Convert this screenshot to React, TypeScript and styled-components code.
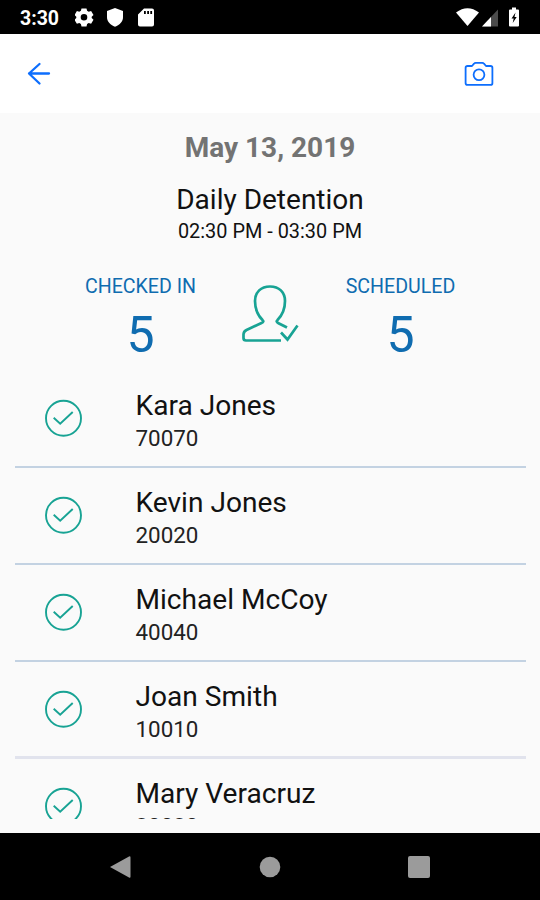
import React from "react";
import styled, { createGlobalStyle } from "styled-components";

const COLOR_BLUE = "#0f6cb0";
const COLOR_ACTION = "#0d6efd";
const COLOR_GREEN = "#18a394";

const GlobalStyle = createGlobalStyle`
  * {
    box-sizing: border-box;
  }
  body {
    margin: 0;
    font-family: Roboto, "Noto Sans", sans-serif;
    background: #fafafa;
  }
  svg {
    display: block;
    flex-shrink: 0;
  }
`;

const Screen = styled.div`
  display: flex;
  flex-direction: column;
  width: 540px;
  height: 900px;
  overflow: hidden;
  background: #fafafa;
`;

const StatusBar = styled.div`
  display: flex;
  justify-content: space-between;
  height: 34px;
  padding: 0 20px;
  background: #000;
  color: #fff;
`;

const StatusLeft = styled.div`
  display: flex;
  align-items: center;
`;

const Clock = styled.div`
  width: 55px;
  padding-top: 4px;
  font-size: 19.5px;
  font-weight: 700;
  line-height: 34px;
`;

const Toolbar = styled.header`
  display: flex;
  align-items: center;
  justify-content: space-between;
  height: 79px;
  padding: 0 46.5px 0 27px;
  background: #fff;
`;

const IconButton = styled.button`
  padding: 0;
  border: none;
  background: none;
  color: ${COLOR_ACTION};
`;

const Summary = styled.section`
  display: flex;
  flex-direction: column;
  align-items: center;
  padding-top: 17px;
`;

const DateText = styled.h1`
  margin: 0;
  color: #737373;
  font-size: 28px;
  font-weight: 700;
  line-height: 36px;
`;

const Title = styled.h2`
  margin: 16px 0 0;
  color: #111;
  font-size: 28px;
  font-weight: 400;
  line-height: 36px;
`;

const Time = styled.div`
  color: #111;
  font-size: 19.9px;
  line-height: 27px;
`;

const Stats = styled.div`
  display: grid;
  grid-template-columns: 202px 58px 202px;
  width: 462px;
  height: 126px;
  padding-top: 29px;
`;

const Stat = styled.div`
  display: flex;
  flex-direction: column;
  align-items: center;
  padding-left: 1px;
  color: ${COLOR_BLUE};
`;

const StatIcon = styled.div`
  padding-top: 10px;
`;

const StatLabel = styled.div`
  font-size: 19.6px;
  line-height: 26px;
`;

const StatValue = styled.div`
  font-size: 50px;
  line-height: 71px;
`;

const List = styled.ul`
  flex: 1;
  margin: 0 14px 0 15px;
  padding: 0;
  overflow: hidden;
  list-style: none;
`;

const Row = styled.li<{ $last?: boolean }>`
  display: flex;
  height: 97px;
  padding: 17px 0 0 30px;
  border-bottom: ${({ $last }) =>
    $last ? "3px solid #e1e3ed" : "2px solid #c3d2e2"};
`;

const CheckBox = styled.div`
  width: 90.5px;
  padding-top: 11px;
`;

const Name = styled.div`
  color: #111;
  font-size: 28.1px;
  line-height: 35px;
`;

const StudentId = styled.div`
  color: #222;
  font-size: 22.4px;
  line-height: 30px;
`;

const NavBar = styled.nav`
  display: flex;
  align-items: center;
  justify-content: space-between;
  height: 67px;
  margin-top: 14px;
  padding: 0 110px 0 109px;
  background: #000;
`;

const students = [
  { name: "Kara Jones", id: "70070" },
  { name: "Kevin Jones", id: "20020" },
  { name: "Michael McCoy", id: "40040" },
  { name: "Joan Smith", id: "10010" },
  { name: "Mary Veracruz", id: "30030" },
];

function StatusIcons() {
  return (
    <svg width='84' height='34' viewBox='0 0 84 34' fill='#fff'>
      <path
        fillRule='evenodd'
        d='M7 9h5l.6 2.4 1.6.9 2.4-.7 2.4 4-1.8 1.7v1.4l1.8 1.7-2.4 4-2.4-.7-1.6.9L12 27H7l-.6-2.4-1.6-.9-2.4.7-2.4-4 1.8-1.7v-1.4L0 15.600l2.4-4 2.4.7 1.600-.9zM9.500 14.500a3.300 3.300 0 1 0 0 6.600a3.300 3.300 0 1 0 0-6.600z'
        transform='translate(-.5 -.6)'
      />
      <path d='M40 8l8 3v6c0 4.500-3 7.800-8 9.700c-5-1.900-8-5.200-8-9.700v-6z' />
      <path
        fillRule='evenodd'
        d='M69 8.500h8a2 2 0 0 1 2 2v14a2 2 0 0 1-2 2H65a2 2 0 0 1-2-2V14.500zM69 11v3h1.800v-3zM72.200 11v3H74v-3zM75.300 11v3h1.800v-3z'
      />
    </svg>
  );
}

function SignalIcons() {
  return (
    <svg width='64' height='34' viewBox='0 0 64 34' fill='#fff'>
      <path d='M0 12.500Q11.500 4 23 12.500L11.500 26z' />
      <path d='M42 9.500v17H26z' fill='#4b4b4b' />
      <path d='M35 17v9.500H26z' />
      <path
        fillRule='evenodd'
        d='M56 7.500h4v2h2q1 0 1 1V25.500q0 1-1 1h-8q-1 0-1-1V10.500q0-1 1-1h2zM59.500 12.500l-4 6h2.200l-1 4.500 4-6h-2.200z'
      />
    </svg>
  );
}

function BackIcon() {
  return (
    <svg width='24' height='24' viewBox='0 0 24 24' fill='none' stroke='currentColor' strokeWidth='2.3' strokeLinecap='round' strokeLinejoin='round'>
      <path d='M22 11.500H2M12.500 2L2 11.500 12.500 21.500' />
    </svg>
  );
}

function CameraIcon() {
  return (
    <svg width='30' height='26' viewBox='0 0 30 26' fill='none' stroke='currentColor' strokeWidth='1.8' strokeLinejoin='round'>
      <path d='M3.500 5H8l2-2.300q.7-.9 1.700-.9h6.600q1 0 1.700.9L22 5h4.500q1.900 0 1.900 1.700v15.500q0 1.700-1.900 1.700h-23q-1.900 0-1.900-1.700V6.700Q1.600 5 3.500 5z' />
      <circle cx='15' cy='13.700' r='5.400' />
    </svg>
  );
}

function PersonIcon() {
  return (
    <svg width='58' height='60' viewBox='0 0 58 60' fill='none' stroke={COLOR_GREEN} strokeWidth='2.7' strokeLinejoin='round'>
      <path d='M40 56.500H5q-2.500 0-2.500-2.500v-3.500q0-3 3-4.500L20.500 39q3-1.200 1-3Q14 28.500 14 17C14 8 20 2.500 29 2.500S44 8 44 17q0 11.500-7.500 19q-2 1.700 1 3.200l8.500 4.300' />
      <path d='M40 48.500l6.500 7L56.500 41.500' strokeLinejoin='miter' />
    </svg>
  );
}

function CheckIcon() {
  return (
    <svg width='38' height='38' viewBox='0 0 38 38' fill='none' stroke={COLOR_GREEN} strokeWidth='1.9'>
      <circle cx='18.500' cy='19.300' r='17.500' />
      <path d='M8.700 18.700l6.500 6L27.700 13' />
    </svg>
  );
}

export default function App() {
  return (
    <>
      <GlobalStyle />
      <Screen>
        <StatusBar>
          <StatusLeft>
            <Clock>3:30</Clock>
            <StatusIcons />
          </StatusLeft>
          <SignalIcons />
        </StatusBar>
        <Toolbar>
          <IconButton aria-label='Back'>
            <BackIcon />
          </IconButton>
          <IconButton aria-label='Camera'>
            <CameraIcon />
          </IconButton>
        </Toolbar>
        <Summary>
          <DateText>May 13, 2019</DateText>
          <Title>Daily Detention</Title>
          <Time>02:30 PM - 03:30 PM</Time>
          <Stats>
            <Stat>
              <StatLabel>CHECKED IN</StatLabel>
              <StatValue>5</StatValue>
            </Stat>
            <StatIcon>
              <PersonIcon />
            </StatIcon>
            <Stat>
              <StatLabel>SCHEDULED</StatLabel>
              <StatValue>5</StatValue>
            </Stat>
          </Stats>
        </Summary>
        <List>
          {students.map(({ name, id }, index) => (
            <Row key={id} $last={index === students.length - 2}>
              <CheckBox>
                <CheckIcon />
              </CheckBox>
              <div>
                <Name>{name}</Name>
                <StudentId>{id}</StudentId>
              </div>
            </Row>
          ))}
        </List>
        <NavBar>
          <svg width='22' height='24' viewBox='0 0 22 24' fill='#9b9b9b'>
            <path d='M1 12L20 1.500q1.500-.8 1.500 1v19q0 1.800-1.500 1z' />
          </svg>
          <svg width='22' height='22' viewBox='0 0 22 22' fill='#9b9b9b'>
            <circle cx='11' cy='11' r='10.300' />
          </svg>
          <svg width='22' height='22' viewBox='0 0 22 22' fill='#9b9b9b'>
            <rect width='22' height='22' rx='2' />
          </svg>
        </NavBar>
      </Screen>
    </>
  );
}
